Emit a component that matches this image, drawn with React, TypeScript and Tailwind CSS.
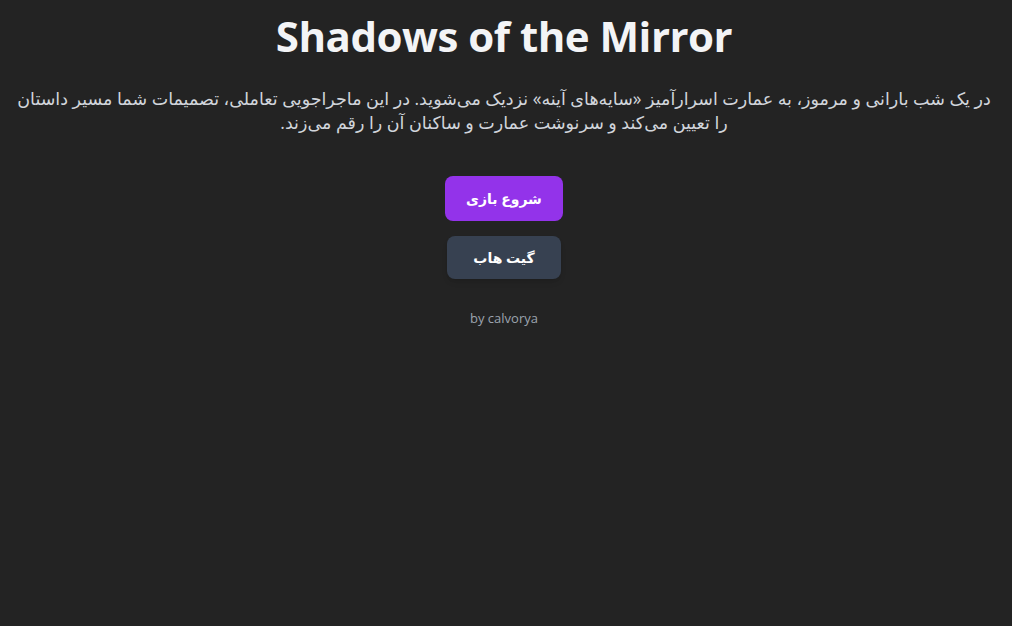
export default function App() {
  return (
    <div
      className="min-h-screen bg-[#232323] pl-3 pr-4 text-center"
      style={{ fontFamily: '"Open Sans", "Noto Sans", "DejaVu Sans", sans-serif' }}
    >
      <h1 className="pt-[8px] text-[42px] font-bold leading-[56px] tracking-[-0.5px] text-[#f3f4f6]">
        Shadows of the Mirror
      </h1>
      <p dir="rtl" className="mt-[22px] text-[17.5px] leading-[24px] text-[#d1d5db]">
        در یک شب بارانی و مرموز، به عمارت اسرارآمیز «سایه‌های آینه» نزدیک می‌شوید. در این ماجراجویی تعاملی، تصمیمات شما مسیر داستان را تعیین می‌کند و سرنوشت عمارت و ساکنان آن را رقم می‌زند.
      </p>
      <div className="mt-[42px] flex flex-col items-center gap-[15px]">
        <button
          type="button"
          className="h-[45px] w-[118px] rounded-lg bg-[#9333ea] text-sm font-bold text-white"
        >
          شروع بازی
        </button>
        <button
          type="button"
          className="h-[43px] w-[114px] rounded-lg bg-[#374151] text-sm font-bold text-white shadow-md"
        >
          گیت هاب
        </button>
      </div>
      <p className="mt-[30px] text-[13px] text-[#9ca3af]">by calvorya</p>
    </div>
  );
}
